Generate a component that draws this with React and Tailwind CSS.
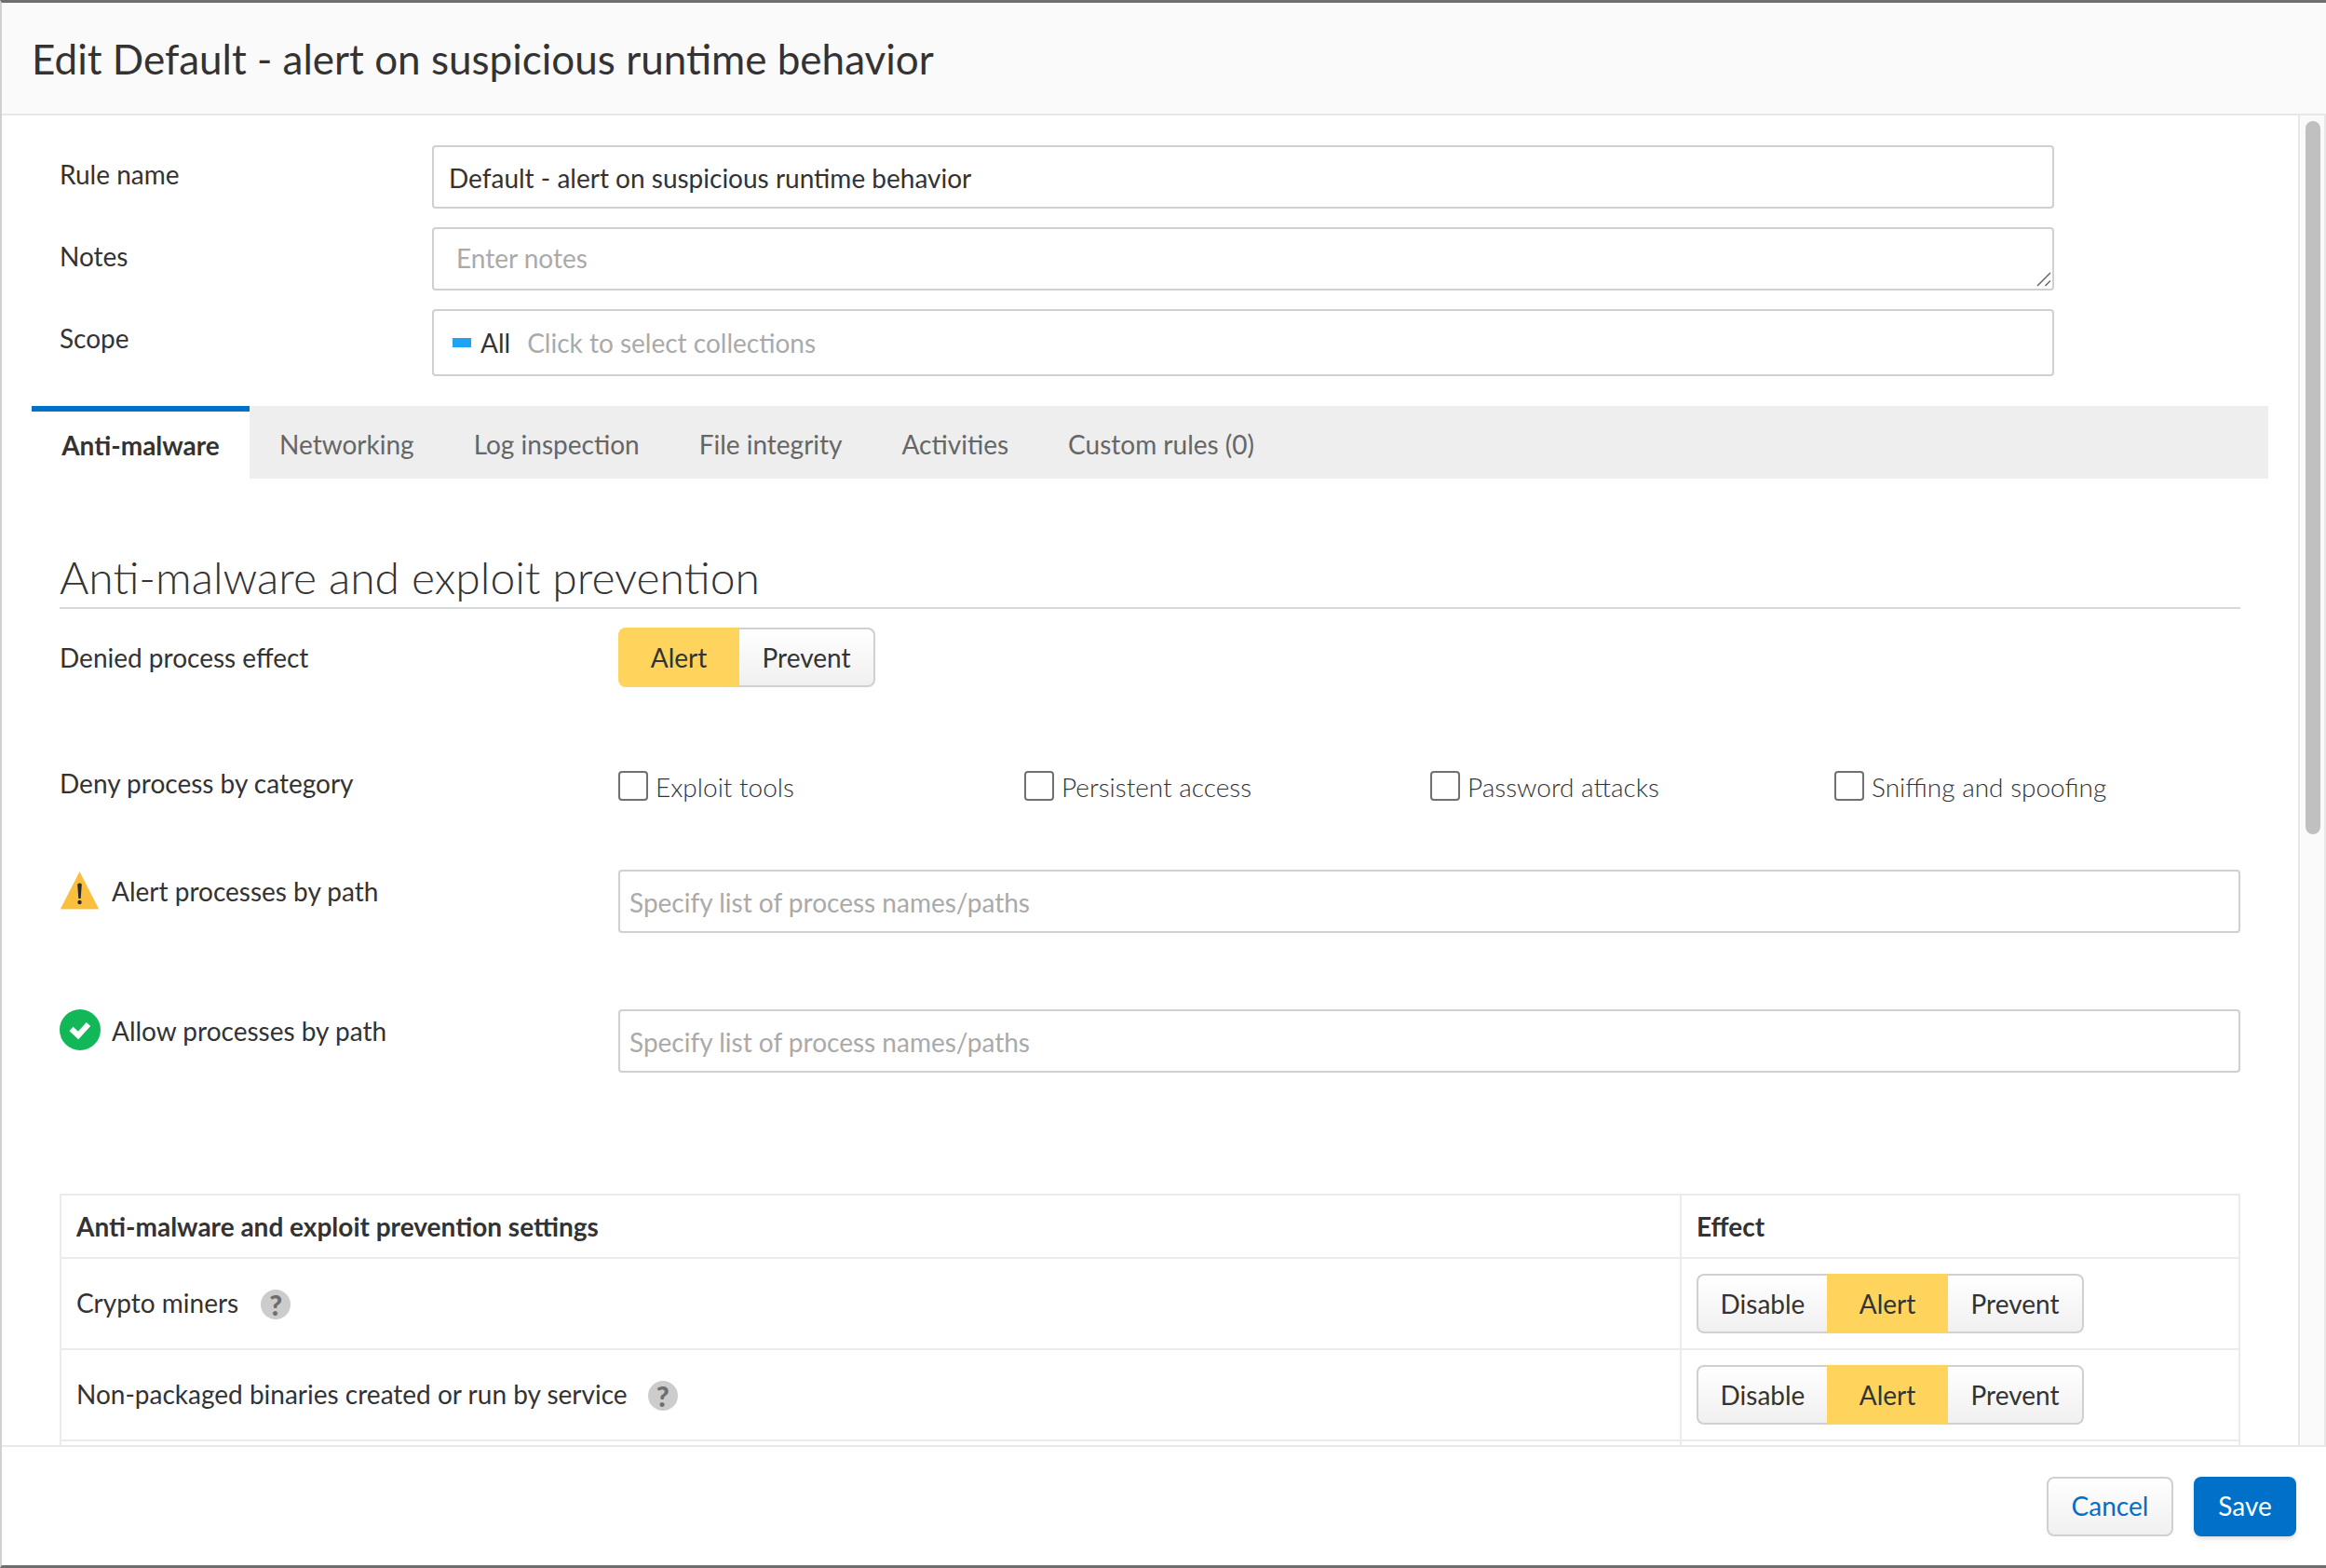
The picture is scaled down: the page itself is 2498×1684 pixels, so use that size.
import React from "react";

const Seg = ({ items, active }) => (
  <div className="flex h-[64px] w-fit">
    {items.map((label, i) => {
      const on = label === active;
      const first = i === 0;
      const last = i === items.length - 1;
      return (
        <button
          key={label}
          className={
            "h-full pb-[1px] text-[28px] text-[#333] " +
            (label === "Disable" ? "w-[140px] " : label === "Alert" ? "w-[130px] " : "w-[146px] ") +
            (first ? "rounded-l-[8px] " : "") +
            (last ? "rounded-r-[8px] " : "") +
            (on
              ? "bg-[#ffd45c]"
              : "border-y-2 border-[#d0d0d0] bg-gradient-to-b from-white to-[#f0f0f0] " +
                (first ? "border-l-2 " : "") +
                (last ? "border-r-2" : ""))
          }
        >
          {label}
        </button>
      );
    })}
  </div>
);

const Check = ({ label, width }) => (
  <label className={"flex items-start gap-2 " + width}>
    <span className="mt-[8px] h-[32px] w-[32px] rounded-[4px] border-2 border-[#707070] bg-white" />
    <span className="mt-[4px] text-[28px] font-light text-[#333]">{label}</span>
  </label>
);

const Help = () => (
  <span className="mt-[2px] flex h-[32px] w-[32px] items-center justify-center rounded-full bg-[#cccccc] text-[30px] leading-none font-black text-[#6e6e6e]">
    ?
  </span>
);

const PathInput = () => (
  <input
    readOnly
    placeholder="Specify list of process names/paths"
    className="h-[68px] w-[1742px] rounded-[4px] border-2 border-[#d0d0d0] px-[10px] pt-[1px] text-[28px] outline-none placeholder:text-[#aaa]"
  />
);

const SettingRow = ({ label, gap }) => (
  <div className="flex h-[98px] border-b-2 border-[#ebebeb]">
    <div className={"flex w-[1740px] items-center border-r-2 border-[#ebebeb] pl-[16px] text-[28px] text-[#333] " + gap}>
      <span className="pb-[2px]">{label}</span>
      <Help />
    </div>
    <div className="flex items-center pl-[16px]">
      <Seg items={["Disable", "Alert", "Prevent"]} active="Alert" />
    </div>
  </div>
);

export default function App() {
  const tabs = ["Networking", "Log inspection", "File integrity", "Activities", "Custom rules (0)"];

  return (
    <div className="flex h-[1684px] w-[2498px] flex-col overflow-hidden border-y-[3px] border-l-2 border-l-[#d0d0d0] border-t-[#6e6e6e] border-b-[#6e6e6e] bg-white font-['Lato',sans-serif] text-[#333]">
      <header className="flex h-[121px] shrink-0 items-center border-b-2 border-[#e8e8e8] bg-[#fafafa] pl-[32px] text-[44px]">
        Edit Default - alert on suspicious runtime behavior
      </header>

      <div className="flex min-h-0 flex-1">
        <main className="min-w-0 flex-1 overflow-hidden pl-[32px] pt-[32px]">
          <div className="flex h-[68px] pl-[30px]">
            <div className="w-[400px] pt-[10px] text-[28px]">Rule name</div>
            <input
              readOnly
              value="Default - alert on suspicious runtime behavior"
              className="w-[1742px] rounded-[4px] border-2 border-[#d0d0d0] px-[16px] pt-[2px] text-[28px] outline-none"
            />
          </div>
          <div className="mt-[20px] flex h-[68px] pl-[30px]">
            <div className="w-[400px] pt-[10px] text-[28px]">Notes</div>
            <div className="relative">
              <textarea
                readOnly
                placeholder="Enter notes"
                className="block h-[68px] w-[1742px] resize-none rounded-[4px] border-2 border-[#d0d0d0] px-[24px] py-[10px] text-[28px] outline-none placeholder:text-[#aaa]"
              />
              <svg width="16" height="16" viewBox="0 0 16 16" className="absolute right-[3px] bottom-[4px]">
                <path d="M1 15 L15 1 M9.5 15 L15 9.5" stroke="#666" strokeWidth="1.5" fill="none" />
              </svg>
            </div>
          </div>
          <div className="mt-[20px] flex h-[72px] pl-[30px]">
            <div className="w-[400px] pt-[10px] text-[28px]">Scope</div>
            <div className="flex w-[1742px] items-center rounded-[4px] border-2 border-[#d0d0d0] pl-[20px] text-[28px]">
              <span className="h-[10px] w-[20px] bg-[#1fa4f4]" />
              <span className="ml-[10px]">All</span>
              <span className="ml-[18px] text-[#aaa]">Click to select collections</span>
            </div>
          </div>

          <nav className="mt-[32px] flex h-[78px] w-[2402px] bg-[#eeeeee] text-[28px]">
            <div className="flex w-[234px] items-center justify-center border-t-[6px] border-[#0070c9] bg-white font-bold">
              Anti-malware
            </div>
            {tabs.map((t) => (
              <div key={t} className="flex items-center px-[32px] pt-[4px] text-[#666]">
                {t}
              </div>
            ))}
          </nav>

          <section className="pl-[30px]">
            <h2 className="mt-[78px] h-[62px] w-[2342px] border-b-2 border-[#d5d8dc] text-[48px] font-light leading-[56px]">
              Anti-malware and exploit prevention
            </h2>

            <div className="mt-[20px] flex">
              <div className="w-[600px] pt-[11px] text-[28px]">Denied process effect</div>
              <Seg items={["Alert", "Prevent"]} active="Alert" />
            </div>

            <div className="mt-[82px] flex">
              <div className="w-[600px] text-[28px]">Deny process by category</div>
              <div className="flex">
                <Check label="Exploit tools" width="w-[436px]" />
                <Check label="Persistent access" width="w-[436px]" />
                <Check label="Password attacks" width="w-[434px]" />
                <Check label="Sniffing and spoofing" width="w-[400px]" />
              </div>
            </div>

            <div className="mt-[68px] flex">
              <div className="flex w-[600px] items-start gap-[14px] text-[28px]">
                <svg width="42" height="41" viewBox="0 0 42 41" className="mt-[2px]">
                  <path d="M21.5 0 L42 40 L1 40 Z" fill="#fbbf3f" />
                  <path d="M1 40 H42 V41 H1 Z" fill="#fde3a8" />
                  <path d="M19.2 14 Q19.2 12.5 21.5 12.5 Q23.8 12.5 23.8 14 L22.7 29 H20.3 Z" fill="#2b2b2b" />
                  <circle cx="21.5" cy="33" r="2.2" fill="#2b2b2b" />
                </svg>
                <span className="pt-[2px]">Alert processes by path</span>
              </div>
              <PathInput />
            </div>

            <div className="mt-[82px] flex">
              <div className="flex w-[600px] items-start gap-[12px] text-[28px]">
                <svg width="44" height="44" viewBox="0 0 44 44">
                  <circle cx="22" cy="22" r="22" fill="#12b757" />
                  <path d="M12.5 21 L20 28 L31 16" fill="none" stroke="#fff" strokeWidth="6" />
                </svg>
                <span className="pt-[2px]">Allow processes by path</span>
              </div>
              <PathInput />
            </div>

            <div className="mt-[130px] w-[2342px] border-x-2 border-t-2 border-[#ebebeb]">
              <div className="flex h-[68px] border-b-2 border-[#ebebeb] text-[28px] font-bold">
                <div className="flex w-[1740px] items-center border-r-2 border-[#ebebeb] pl-[16px]">
                  Anti-malware and exploit prevention settings
                </div>
                <div className="flex items-center pl-[16px]">Effect</div>
              </div>
              <SettingRow label="Crypto miners" gap="gap-[24px]" />
              <SettingRow label="Non-packaged binaries created or run by service" gap="gap-[22px]" />
              <div className="h-[98px] w-[1740px] border-r-2 border-[#ebebeb]" />
            </div>
          </section>
        </main>

        <aside className="w-[30px] shrink-0 border-x-2 border-[#e8e8e8] bg-[#fafafa] pl-[6px] pt-[6px]">
          <div className="h-[766px] w-[16px] rounded-full bg-[#c0c0c0]" />
        </aside>
      </div>

      <footer className="flex h-[129px] shrink-0 items-start justify-end gap-[22px] border-t-2 border-[#e8e8e8] bg-white pr-[32px] pt-[32px] text-[28px]">
        <button className="h-[64px] w-[136px] rounded-[8px] border-2 border-[#d0d0d0] bg-gradient-to-b from-white to-[#f0f0f0] pb-[2px] text-[#0070c9]">
          Cancel
        </button>
        <button className="h-[64px] w-[110px] rounded-[8px] bg-[#0070c9] pb-[2px] text-white shadow-md">Save</button>
      </footer>
    </div>
  );
}
